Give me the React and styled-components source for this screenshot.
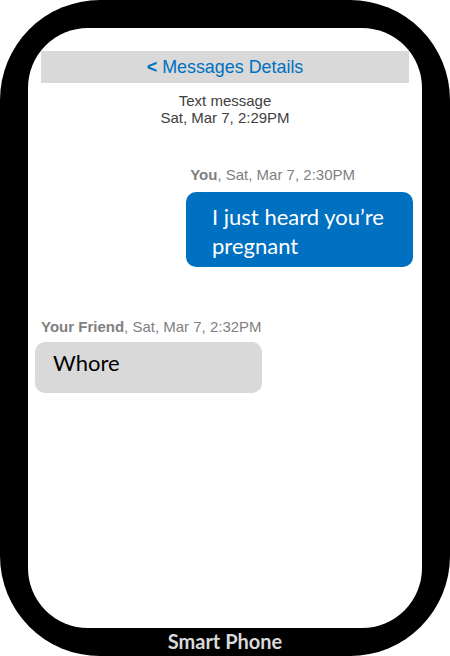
import React from "react";
import styled, { createGlobalStyle } from "styled-components";

const Global = createGlobalStyle`
  html, body { margin: 0; padding: 0; background: #fff; }
  body { font-family: "Liberation Sans", Arial, sans-serif; }
`;

const Phone = styled.div`
  width: 450px;
  height: 656px;
  box-sizing: border-box;
  background: #000;
  border-radius: 100px;
  padding: 28px 28px 0;
  display: flex;
  flex-direction: column;
`;

const Screen = styled.div`
  flex: 1;
  background: #fff;
  border-radius: 60px;
  padding-top: 23px;
  display: flex;
  flex-direction: column;
`;

const Header = styled.div`
  margin: 0 13px;
  height: 32px;
  background: #d9d9d9;
  color: #0070c0;
  font-size: 17.9px;
  display: flex;
  align-items: center;
  justify-content: center;
  b { font-weight: bold; margin-right: 5px; }
`;

const Meta = styled.div`
  margin-top: 9px;
  text-align: center;
  color: #404040;
  font-size: 15px;
  line-height: 17px;
`;

const Label = styled.div`
  color: #7f7f7f;
  font-size: 15px;
  line-height: 17px;
  align-self: ${(p) => (p.$mine ? "flex-end" : "flex-start")};
  margin: ${(p) => (p.$mine ? "40px 67px 0 0" : "51px 0 0 13px")};
  b { font-weight: bold; }
`;

const Bubble = styled.div`
  box-sizing: border-box;
  width: 227px;
  border-radius: 10px;
  font-family: "Lato", "Open Sans", sans-serif;
  font-size: 22px;
  line-height: 29px;
  align-self: ${(p) => (p.$mine ? "flex-end" : "flex-start")};
  background: ${(p) => (p.$mine ? "#0070c0" : "#d9d9d9")};
  color: ${(p) => (p.$mine ? "#fff" : "#000")};
  margin: ${(p) => (p.$mine ? "9px 9px 0 0" : "7px 0 0 7px")};
  padding: ${(p) => (p.$mine ? "10px 14px 7px 26px" : "6px 18px 16px 18px")};
`;

const Brand = styled.div`
  height: 28px;
  line-height: 26px;
  text-align: center;
  color: #d9d9d9;
  font-family: "Lato", "Open Sans", sans-serif;
  font-weight: bold;
  font-size: 20px;
`;

export default function App() {
  return (
    <>
      <Global />
      <Phone>
        <Screen>
          <Header>
            <b>&lt;</b>Messages Details
          </Header>
          <Meta>
            Text message
            <br />
            Sat, Mar 7, 2:29PM
          </Meta>
          <Label $mine>
            <b>You</b>, Sat, Mar 7, 2:30PM
          </Label>
          <Bubble $mine>I just heard you’re pregnant</Bubble>
          <Label>
            <b>Your Friend</b>, Sat, Mar 7, 2:32PM
          </Label>
          <Bubble>Whore</Bubble>
        </Screen>
        <Brand>Smart Phone</Brand>
      </Phone>
    </>
  );
}
